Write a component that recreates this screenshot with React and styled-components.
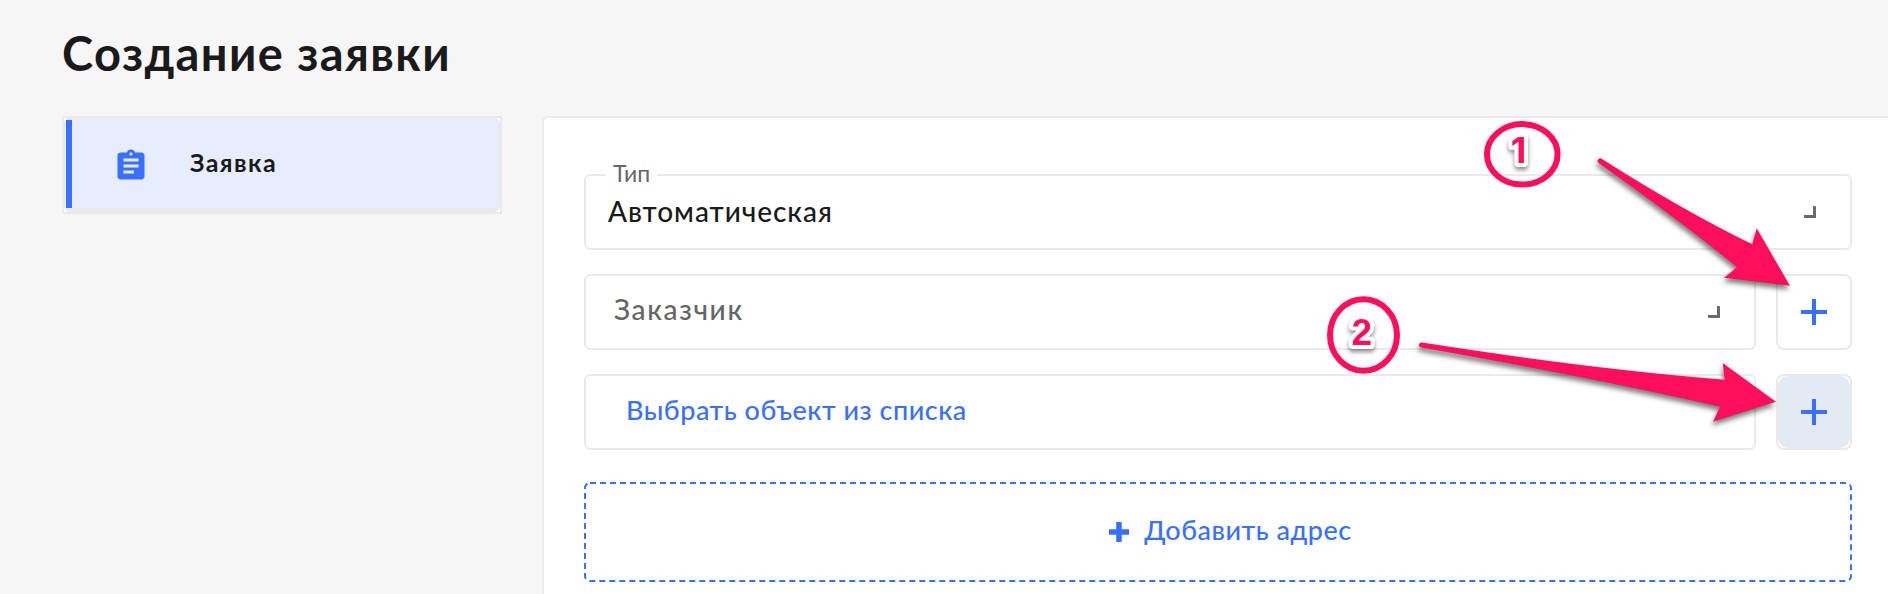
import React from "react";
import styled, { createGlobalStyle } from "styled-components";
import { MdAssignment } from "react-icons/md";

const blue = "#3a70ff";
const pink = "#ff0e5b";
const line = "#eaeaea";

const GlobalStyle = createGlobalStyle`
  * { box-sizing: border-box; }
  body {
    margin: 0;
    background: #f6f6f6;
    font-family: Lato, "Open Sans", sans-serif;
    color: #1a1a1a;
  }
`;

const Page = styled.main`
  position: relative;
  height: 594px;
  padding: 23px 0 0 62px;
  overflow: hidden;
`;

const Title = styled.h1`
  margin: 0 0 33px;
  font-size: 47px;
  line-height: 60px;
  font-weight: 700;
  letter-spacing: 1.4px;
`;

const Columns = styled.div`
  display: flex;
  align-items: flex-start;
  gap: 40px;
`;

const Sidebar = styled.nav`
  width: 440px;
  height: 98px;
  flex: none;
  border: 2px solid ${line};
  background: #fff;
`;

const SidebarItem = styled.a`
  display: flex;
  align-items: center;
  height: 94px;
  border: solid ${line};
  border-width: 2px 2px 4px 2px;
  border-radius: 6px;
`;

const SidebarFill = styled.span`
  display: flex;
  align-items: center;
  width: 100%;
  height: 88px;
  padding-left: 41px;
  border-left: 6px solid ${blue};
  background: #e7edff;
  color: ${blue};

  svg {
    margin-top: 3px;
  }
`;

const SidebarLabel = styled.span`
  margin-left: 41px;
  padding-bottom: 4px;
  color: #1a1a1a;
  font-size: 25px;
  line-height: 30px;
  font-weight: 700;
  letter-spacing: 1.4px;
`;

const Panel = styled.section`
  flex: 1;
  display: flex;
  flex-direction: column;
  gap: 24px;
  height: 520px;
  padding: 56px 36px 0 40px;
  border: solid ${line};
  border-width: 2px 0 0 2px;
  border-radius: 6px 0 0 0;
  background: #fff;
`;

const Row = styled.div`
  display: flex;
  gap: 20px;
`;

const Field = styled.div`
  position: relative;
  flex: 1;
  display: flex;
  align-items: center;
  justify-content: space-between;
  height: 76px;
  padding: 0 34px 0 ${(p) => p.$indent}px;
  border: 2px solid ${line};
  border-radius: 6px;
`;

const FieldLabel = styled.span`
  position: absolute;
  left: 20px;
  top: -17px;
  padding: 0 7px;
  background: #fff;
  color: #666;
  font-size: 23px;
  line-height: 28px;
`;

const FieldText = styled.span`
  padding-bottom: ${(p) => p.$lift}px;
  color: ${(p) => p.$color};
  font-size: ${(p) => p.$size}px;
  line-height: 34px;
  font-weight: 500;
  letter-spacing: ${(p) => p.$spacing}px;
`;

const Corner = styled.span`
  width: 12px;
  height: 12px;
  border: solid #6a6a6a;
  border-width: 0 3px 3px 0;
  border-radius: 1px;
`;

const AddButton = styled.button`
  display: flex;
  align-items: center;
  justify-content: center;
  width: 76px;
  height: 76px;
  padding: 0;
  border: 2px solid ${line};
  border-radius: 8px;
  background: #fff;
`;

const AddButtonFace = styled.span`
  display: flex;
  align-items: center;
  justify-content: center;
  width: 72px;
  height: 72px;
  border-radius: 10px;
  background: ${(p) => (p.$active ? "#e4eaf1" : "#fff")};
`;

const Dashed = styled.button`
  position: relative;
  display: flex;
  align-items: center;
  justify-content: center;
  gap: 15px;
  height: 100px;
  margin-top: 8px;
  padding: 0 0 0 25px;
  border: 0;
  background: none;
  font-family: inherit;
`;

const DashedFrame = styled.svg`
  position: absolute;
  inset: 0;
  width: 100%;
  height: 100%;
`;

const Annotations = styled.svg`
  position: absolute;
  inset: 0;
  pointer-events: none;

  path {
    fill: ${pink};
    filter: drop-shadow(-1px 4px 2.5px rgba(0, 0, 0, 0.5));
  }
  ellipse {
    fill: none;
    stroke: ${pink};
    stroke-width: 6;
  }
`;

const StepNumber = styled.text`
  fill: ${pink};
  stroke: #fff;
  stroke-width: 8px;
  stroke-linejoin: round;
  paint-order: stroke;
  text-anchor: middle;
  font: bold ${(p) => p.$size}px ${(p) => p.$family}, sans-serif;
  filter: drop-shadow(0 3px 2px rgba(0, 0, 0, 0.45));
`;

const Plus = ({ size, weight }) => (
  <svg width={size} height={size} viewBox={`0 0 ${size} ${size}`}>
    <path
      d={`M${size / 2} 0V${size}M0 ${size / 2}H${size}`}
      stroke={blue}
      strokeWidth={weight}
    />
  </svg>
);

export default function App() {
  return (
    <Page>
      <GlobalStyle />
      <Title>Создание заявки</Title>
      <Columns>
        <Sidebar>
          <SidebarItem>
            <SidebarFill>
              <MdAssignment size={36} />
              <SidebarLabel>Заявка</SidebarLabel>
            </SidebarFill>
          </SidebarItem>
        </Sidebar>
        <Panel>
          <Row>
            <Field $indent={22}>
              <FieldLabel>Тип</FieldLabel>
              <FieldText $lift={2} $color="#1a1a1a" $size={28} $spacing={0.95}>
                Автоматическая
              </FieldText>
              <Corner />
            </Field>
          </Row>
          <Row>
            <Field $indent={28}>
              <FieldText $lift={6} $color="#666" $size={28} $spacing={1.65}>
                Заказчик
              </FieldText>
              <Corner />
            </Field>
            <AddButton>
              <AddButtonFace>
                <Plus size={26} weight={4} />
              </AddButtonFace>
            </AddButton>
          </Row>
          <Row>
            <Field $indent={40}>
              <FieldText $lift={4} $color={blue} $size={27} $spacing={0.5}>
                Выбрать объект из списка
              </FieldText>
            </Field>
            <AddButton>
              <AddButtonFace $active>
                <Plus size={26} weight={4} />
              </AddButtonFace>
            </AddButton>
          </Row>
          <Dashed>
            <DashedFrame>
              <rect x="1" y="1" width="1266" height="98" rx="5" fill="none" stroke={blue} strokeWidth="2" strokeDasharray="6 4" />
            </DashedFrame>
            <Plus size={20} weight={5.5} />
            <FieldText $lift={5} $color={blue} $size={27} $spacing={0.5}>
              Добавить адрес
            </FieldText>
          </Dashed>
        </Panel>
      </Columns>
      <Annotations width="1888" height="594">
        <ellipse cx="1522.3" cy="154.3" rx="35.3" ry="30.2" />
        <ellipse cx="1363.5" cy="335" rx="33.5" ry="35.8" />
        <path d="M1602 159Q1684 211 1752.3 244.3L1756.7 228.3L1790 285.7L1724 277.7L1737 267.3Q1690 228 1598.5 163A2.4 2.4 0 0 1 1602 159Z" />
        <path d="M1422 342.6Q1590 369 1724.7 379.7L1722.7 363L1776 401.7L1713 421.7L1720 406.7Q1590 377 1421 347.5A2.5 2.5 0 0 1 1422 342.6Z" />
        <StepNumber $size={36} $family="Inter" x="1518.5" y="163">1</StepNumber>
        <StepNumber $size={37} $family='"Liberation Sans"' x="1361.8" y="345">2</StepNumber>
      </Annotations>
    </Page>
  );
}
